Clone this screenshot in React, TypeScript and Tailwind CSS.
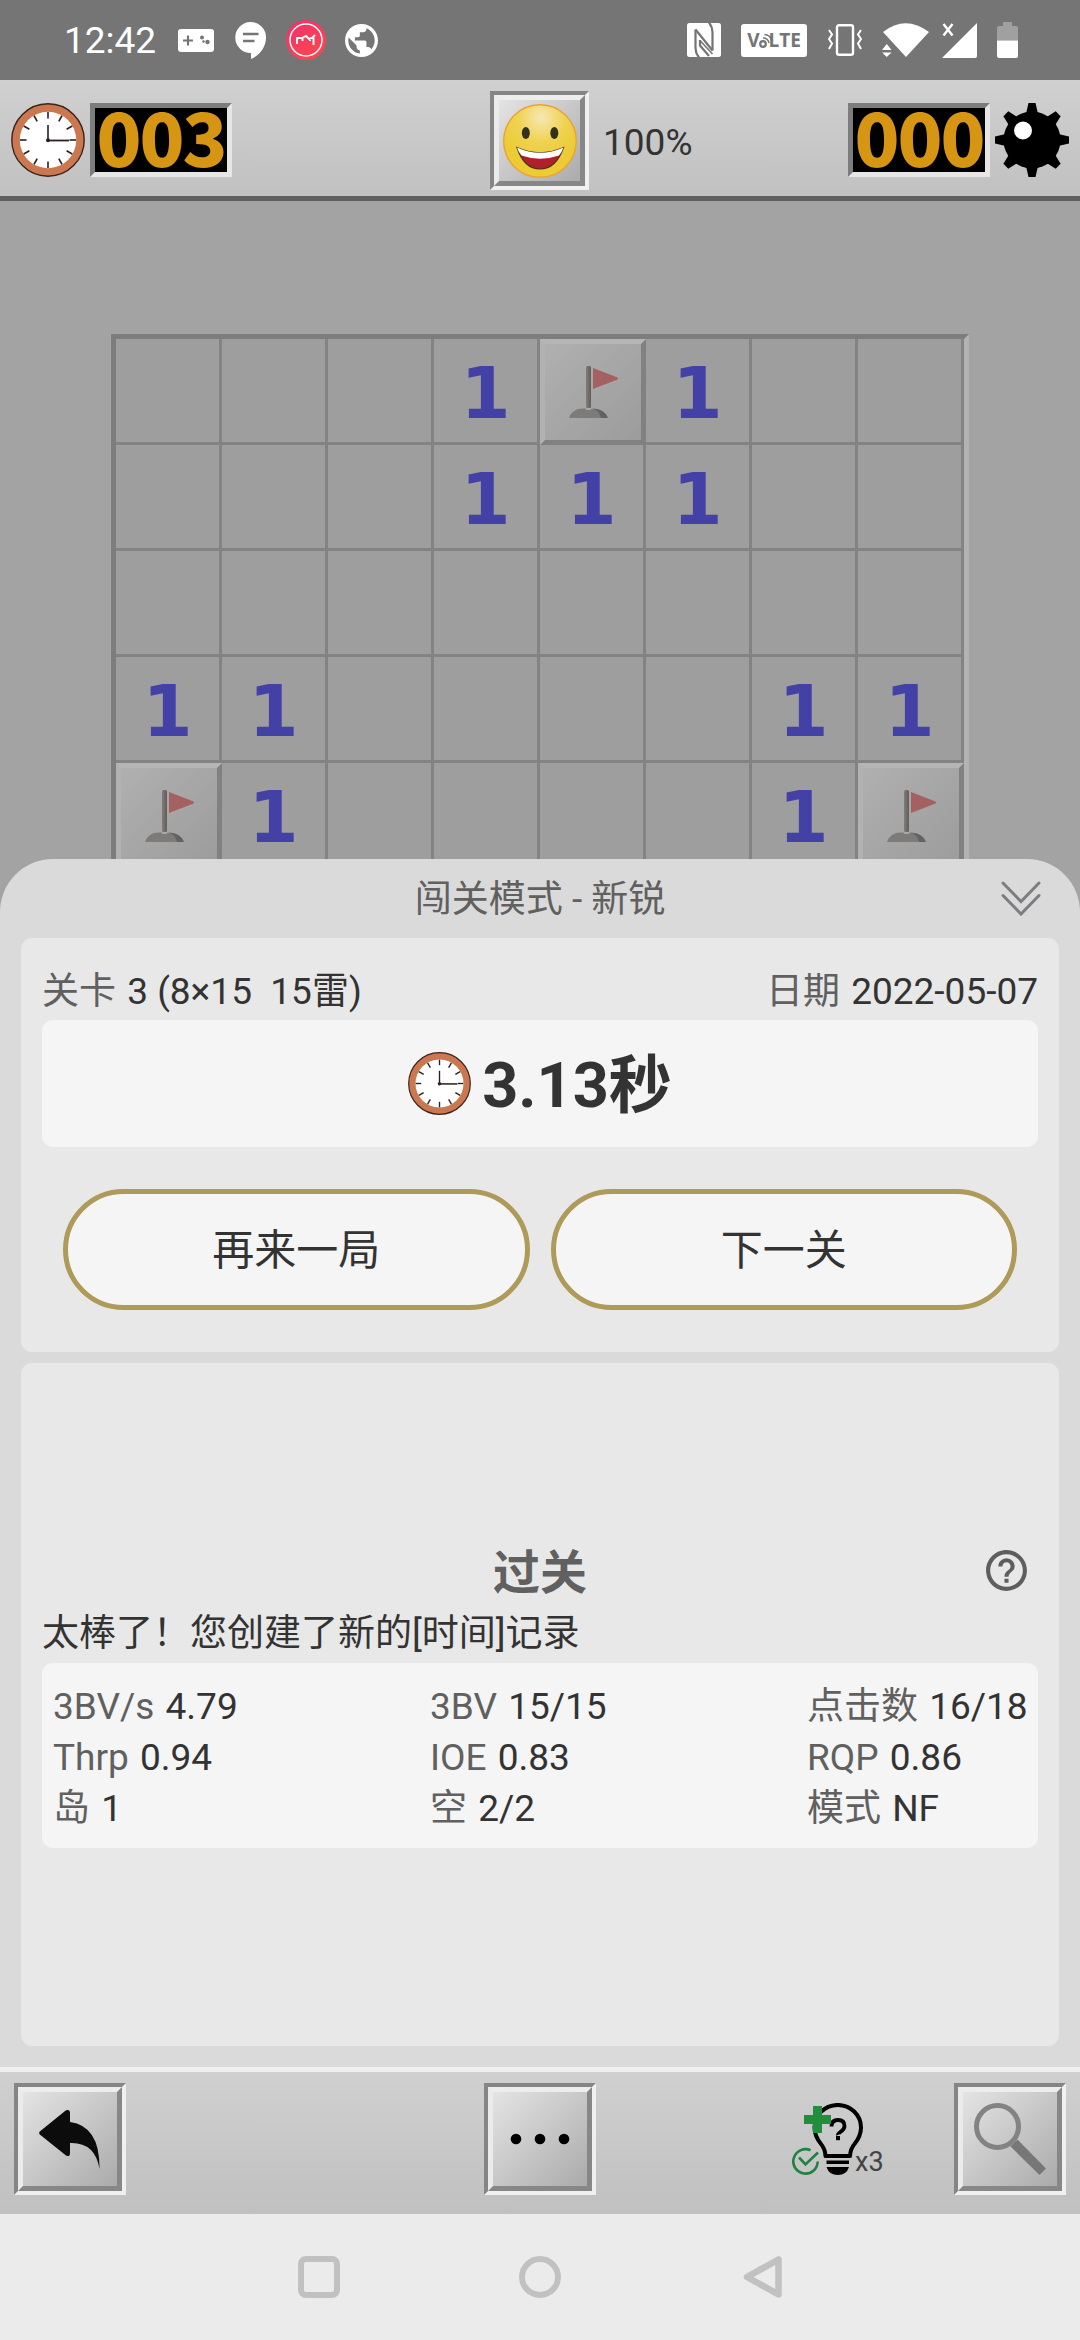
import type { ReactNode } from "react";
import clsx from "clsx";

// "." opened, "F" flagged
const BOARD = ["...1F1..", "...111..", "........", "11....11", "F1....1F"];

const STATS = [
  { label: "3BV/s", value: "4.79" },
  { label: "3BV", value: "15/15" },
  { label: "点击数", value: "16/18" },
  { label: "Thrp", value: "0.94" },
  { label: "IOE", value: "0.83" },
  { label: "RQP", value: "0.86" },
  { label: "岛", value: "1" },
  { label: "空", value: "2/2" },
  { label: "模式", value: "NF" },
];

function ClockIcon({ className }: { className?: string }) {
  return (
    <svg viewBox="0 0 74 74" className={className}>
      <circle cx="37" cy="37" r="36.2" fill="#cb7750" stroke="#3a241c" strokeWidth="1.4" />
      <circle cx="37" cy="37" r="28.2" fill="#fff" />
      <g stroke="#2a2020" strokeWidth="1.6">
        {Array.from({ length: 12 }, (_, i) => (
          <path key={i} d="M37 9v6.5" transform={`rotate(${i * 30} 37 37)`} />
        ))}
        <path d="M37 22v16" />
        <path d="M36 37.5h22" strokeWidth="1.8" />
      </g>
      <circle cx="37" cy="37.3" r="2" fill="#2a2020" />
    </svg>
  );
}

function MineIcon() {
  return (
    <svg viewBox="0 0 74 74" className="size-[74px]">
      <circle cx="37" cy="37" r="28.5" />
      {Array.from({ length: 8 }, (_, i) => (
        <path key={i} d="M33.5 0h7l3 13h-13z" transform={`rotate(${i * 45} 37 37)`} />
      ))}
      <circle cx="28" cy="27.5" r="9" fill="#fff" />
    </svg>
  );
}

function SmileyIcon() {
  return (
    <svg viewBox="0 0 74 74" className="size-[74px]">
      <defs>
        <radialGradient id="face" cx="0.52" cy="0.18" r="0.62">
          <stop offset="0" stopColor="#f7e7b4" />
          <stop offset="0.55" stopColor="#efd24f" />
          <stop offset="1" stopColor="#eccb35" />
        </radialGradient>
      </defs>
      <circle cx="37" cy="37" r="36.3" fill="url(#face)" stroke="#eda22f" strokeWidth="1.4" />
      <ellipse cx="22.8" cy="29" rx="4" ry="6" fill="#33301c" />
      <ellipse cx="51.3" cy="29" rx="4" ry="6" fill="#33301c" />
      <path
        d="M14 43.5Q37 54 60.5 43.5Q53 65 37 65Q21 65 14 43.5z"
        fill="#b0202a"
        stroke="#4a3418"
        strokeWidth="1.2"
      />
      <path d="M14 43.5Q37 54 60.5 43.5Q58.5 49 56 51.5Q37 58 18.5 51.5Q15.5 48 14 43.5z" fill="#fff" />
    </svg>
  );
}

function FlagIcon() {
  return (
    <svg viewBox="0 0 96 96" className="size-24">
      <defs>
        <linearGradient id="pole">
          <stop offset="0" stopColor="#817d7a" />
          <stop offset="1" stopColor="#5f5c5a" />
        </linearGradient>
      </defs>
      <path d="M48 64.5Q60 65 63 74H50z" fill="#646260" />
      <path d="M24 74Q27 64.5 38 64.5H46Q54 65 56 74z" fill="#7d7b79" />
      <ellipse cx="43.5" cy="64.5" rx="3" ry="1.5" fill="#a9a8a6" />
      <rect x="41" y="22" width="5" height="42" rx="1.5" fill="url(#pole)" />
      <path d="M48 24L72.5 33.5q1 1 0 2L48 45z" fill="#a56061" />
    </svg>
  );
}

function Counter({ value }: { value: string }) {
  return (
    <div className="h-[74px] w-[142px] border-[5px] border-t-[#7d7d7d] border-r-[#e6e6e6] border-b-[#e6e6e6] border-l-[#7d7d7d] bg-black">
      <div className="text-center font-['Noto_Sans_CJK_SC',sans-serif] text-[74px] leading-[53px] font-black tracking-[-2px] text-[#d69613]">
        {value}
      </div>
    </div>
  );
}

function BevelButton({ className, children }: { className?: string; children: ReactNode }) {
  return (
    <button
      className={clsx(
        "block border-4 border-t-[#858585] border-r-[#f0f0f0] border-b-[#f0f0f0] border-l-[#858585]",
        className,
      )}
    >
      <span className="flex size-full items-center justify-center border-[5px] border-t-[#ededed] border-r-[#878787] border-b-[#878787] border-l-[#ebebeb] bg-linear-135 from-[#e4e4e4] to-[#ababab]">
        {children}
      </span>
    </button>
  );
}

function StatusBar() {
  return (
    <div className="flex h-20 items-center bg-[#757575] pl-16 text-white">
      <span className="w-[93px] text-[37px] leading-none">12:42</span>
      <svg viewBox="0 0 36 23" className="ml-[21px] h-[23px] w-9">
        <rect width="36" height="23" rx="3" fill="#fff" />
        <path d="M5 11.5h10M10 6.5v10" stroke="#757575" strokeWidth="2.2" />
        <g fill="#757575">
          <circle cx="24" cy="8.5" r="2" />
          <circle cx="29.5" cy="13" r="2.2" />
          <circle cx="25.5" cy="12.5" r="1.3" />
        </g>
      </svg>
      <svg viewBox="0 0 31 37" className="ml-[21px] h-[37px] w-[31px]">
        <path d="M15.5 0a15.5 15.5 0 0 1 15.5 15.5C31 25 25 33 16 37v-6A15.5 15.5 0 0 1 15.5 0z" fill="#fff" />
        <path d="M8 12h15.5M8 19h11.5" stroke="#757575" strokeWidth="2.6" />
      </svg>
      <svg viewBox="0 0 40 40" className="ml-5 size-10">
        <defs>
          <linearGradient id="app" x1="0" y1="0" x2="0.6" y2="1">
            <stop offset="0" stopColor="#f0306e" />
            <stop offset="1" stopColor="#fb4650" />
          </linearGradient>
        </defs>
        <circle cx="20" cy="20" r="20" fill="url(#app)" />
        <circle cx="20" cy="20" r="16" fill="none" stroke="#fff" strokeWidth="1.5" />
        <path
          d="M11 24v-6l5 0 4-2 3 3 3-1 3-3M16.5 18v3M24 18v3M27.5 17v8"
          fill="none"
          stroke="#fff"
          strokeWidth="1.9"
        />
      </svg>
      <svg viewBox="2 2 20 20" className="ml-[19px] size-[33px]" fill="#fff">
        <path d="M12 2C6.48 2 2 6.48 2 12s4.48 10 10 10 10-4.48 10-10S17.52 2 12 2zm-1 17.93c-3.95-.49-7-3.85-7-7.93 0-.62.08-1.21.21-1.79L9 15v1c0 1.1.9 2 2 2v1.93zm6.9-2.54c-.26-.81-1-1.39-1.9-1.39h-1v-3c0-.55-.45-1-1-1H8v-2h2c.55 0 1-.45 1-1V7h2c1.1 0 2-.9 2-2v-.41c2.93 1.19 5 4.06 5 7.41 0 2.08-.8 3.97-2.1 5.39z" />
      </svg>

      <svg viewBox="0 0 34 34" className="ml-[309px] h-[34px] w-[34px]">
        <rect width="34" height="34" rx="2.5" fill="#fff" />
        <path d="M8.500 6.500V25q0 5 3.500 9.500M25.500 27.500V9q0-5-3.500-9.500" fill="none" stroke="#757575" strokeWidth="2.2" />
        <path d="M8.500 6.500L25.500 27.500M13 17v5.500L22 33M12 0" fill="none" stroke="#757575" strokeWidth="2.2" />
        <path d="M13 17.500L25.500 31" fill="none" stroke="#757575" strokeWidth="1.6" />
      </svg>
      <div className="relative ml-5 flex h-[33px] w-[66px] items-center justify-center gap-[9px] rounded-[3px] bg-white font-['Open_Sans',sans-serif] text-[19px] leading-none font-bold text-[#757575]">
        <span>V</span>
        <span>LTE</span>
        <svg viewBox="0 0 14 18" className="absolute top-[7px] left-[17px] h-[18px] w-3.5" fill="none" stroke="#757575">
          <circle cx="5" cy="13" r="2.8" strokeWidth="2.2" />
          <path d="M5 7q5 0 6 5M6.500 3.500q6 .5 7 6" strokeWidth="1.5" />
        </svg>
      </div>
      <svg viewBox="0 0 34 32" className="ml-[21px] h-8 w-[34px]" fill="none" stroke="#fff">
        <rect x="9" y="1.2" width="16" height="29.6" rx="2" strokeWidth="2.4" />
        <path d="M1 6l3 4.5L1 15l3 4.5L1 25M33 6l-3 4.5 3 4.5-3 4.5 3 5.5" strokeWidth="2" />
      </svg>
      <svg viewBox="0 0 48 34" className="ml-5 h-[34px] w-12" fill="#fff">
        <path d="M1 9Q23.5-8.500 47 9L24 34z" />
        <path d="M0 27h9.5L4.8 21zM0 29.5h9.5L4.8 34z" />
      </svg>
      <svg viewBox="0 0 35 35" className="ml-3 size-[35px]" fill="#fff">
        <path d="M35 0v33q0 2-2 2H0z" />
        <path d="M1.5 1l9 11.5M10.5 1l-9 11.5" stroke="#fff" strokeWidth="2.4" />
      </svg>
      <svg viewBox="0 0 21 36" className="ml-5 h-9 w-[21px]">
        <path d="M6 0h9v4h4q2 0 2 2v12.5H0V6q0-2 2-2h4z" fill="#a0a0a0" />
        <path d="M0 18.5h21V34q0 2-2 2H2q-2 0-2-2z" fill="#fff" />
      </svg>
    </div>
  );
}

function GameHeader() {
  return (
    <div className="grid h-[121px] grid-cols-[490px_358px_1fr] border-b-[5px] border-[#606060] bg-linear-to-b from-[#d0d0d0] to-[#c1c1c1]">
      <div className="flex gap-[5px] pt-[23px] pl-[11px]">
        <ClockIcon className="size-[74px]" />
        <Counter value="003" />
      </div>
      <div className="flex pt-[11px]">
        <BevelButton className="size-[99px]">
          <SmileyIcon />
        </BevelButton>
        <span className="pt-1.5 pl-3.5 text-[37px] leading-[91px] text-[#333]">100%</span>
      </div>
      <div className="flex gap-[5px] pt-[23px]">
        <Counter value="000" />
        <MineIcon />
      </div>
    </div>
  );
}

function Cell({ kind }: { kind: string }) {
  if (kind === "F") {
    return (
      <div className="size-[106px] border-[5px] border-t-[#b5b5b5] border-r-[#818181] border-b-[#818181] border-l-[#b2b2b2] bg-linear-135 from-[#b0b0b0] to-[#9c9c9c]">
        <FlagIcon />
      </div>
    );
  }
  return (
    <div className="size-[106px] border-r-[3px] border-b-[3px] border-[#838383] bg-[#9e9e9e] text-center font-['DejaVu_Sans',sans-serif] text-[72px] leading-[108px] font-bold text-[#4340a6]">
      {kind === "." ? "" : kind}
    </div>
  );
}

function Board() {
  return (
    <div className="h-[658px] overflow-hidden bg-[#a3a3a3] pt-[133px]">
      <div className="ml-[111px] grid w-[858px] grid-cols-8 border-[5px] border-t-[#7d7d7d] border-r-[#b3b3b3] border-b-[#b3b3b3] border-l-[#7d7d7d]">
        {BOARD.join("")
          .split("")
          .map((kind, i) => (
            <Cell key={i} kind={kind} />
          ))}
      </div>
    </div>
  );
}

function PillButton({ children }: { children: ReactNode }) {
  return (
    <button className="h-[121px] flex-1 rounded-full border-[5px] border-[#ae9a59] bg-[#f5f5f5] pt-[3px] text-[42px] leading-none text-[#333]">
      {children}
    </button>
  );
}

function Labeled({ label, value }: { label: string; value: string }) {
  return (
    <span className="whitespace-pre">
      <span className="mr-[2px] text-[#606060]">{label}</span> {value}
    </span>
  );
}

function ResultSheet() {
  return (
    <div className="relative z-10 h-[1208px] rounded-t-[53px] bg-[#dadada] px-[21px] text-[37px] text-[#333]">
      <div className="relative h-[79px] text-center leading-[82px] text-[#606060]">
        闯关模式 - 新锐
        <svg
          viewBox="0 0 40 36"
          className="absolute top-[21px] right-[18px] h-9 w-10"
          fill="none"
          stroke="#7b7d80"
          strokeWidth="3"
          strokeLinecap="round"
        >
          <path d="M2 3l18 18.5L38 3M2 15.5L20 34l18-18.5" />
        </svg>
      </div>

      <section className="h-[414px] rounded-[11px] bg-[#e8e8e8] px-[21px] pt-7">
        <div className="flex h-[54px] justify-between leading-[52px]">
          <Labeled label="关卡" value="3 (8×15  15雷)" />
          <Labeled label="日期" value="2022-05-07" />
        </div>
        <div className="flex h-[127px] items-center justify-center gap-[11px] rounded-[11px] bg-[#f5f5f5]">
          <ClockIcon className="size-[63px]" />
          <span className="pt-1 text-[63px] leading-none font-bold">3.13秒</span>
        </div>
        <div className="mt-[42px] flex gap-[21px] px-[21px]">
          <PillButton>再来一局</PillButton>
          <PillButton>下一关</PillButton>
        </div>
      </section>

      <section className="mt-[11px] h-[683px] rounded-[11px] bg-[#e8e8e8] px-[21px] pt-[174px]">
        <div className="relative h-[72px] text-center text-[47px] leading-[71px] font-bold text-[#606060]">
          过关
          <svg viewBox="0 0 24 24" className="absolute top-[9px] right-[7px] size-[49px]" fill="#5e5e5e">
            <path d="M11 18h2v-2h-2v2zm1-16C6.48 2 2 6.48 2 12s4.48 10 10 10 10-4.48 10-10S17.52 2 12 2zm0 18c-4.41 0-8-3.59-8-8s3.59-8 8-8 8 3.59 8 8-3.59 8-8 8zm0-14c-2.21 0-4 1.79-4 4h2c0-1.1.9-2 2-2s2 .9 2 2c0 2-3 1.75-3 5h2c0-2.25 3-2.5 3-5 0-2.21-1.79-4-4-4z" />
          </svg>
        </div>
        <p className="h-[54px] leading-[50px]">太棒了！您创建了新的[时间]记录</p>
        <div className="grid h-[185px] grid-cols-[377px_377px_auto] content-center rounded-[11px] bg-[#f5f5f5] pt-[3px] pl-[11px] leading-[51px]">
          {STATS.map((s) => (
            <Labeled key={s.label} label={s.label} value={s.value} />
          ))}
        </div>
      </section>
    </div>
  );
}

function HintButton() {
  return (
    <div className="relative h-[72px] w-[91px]">
      <svg viewBox="0 0 72 72" className="size-[72px]">
        <path
          d="M33.5 53Q33 45.5 29 41Q22.5 33 22.5 24.5A23.2 22.5 0 0 1 69 24.5Q69 33 62.5 41Q58.5 45.5 58 53z"
          fill="none"
          stroke="#000"
          strokeWidth="4"
          strokeLinejoin="round"
        />
        <path d="M34.5 57.5h22.5v3.500H34.5zM34.5 64h22.5q-2.5 8-11.2 8t-11.3-8z" />
        <path
          d="M39.500 23.500q0-6.500 6.500-6.500t6.500 6q0 3-3.500 5.500t-3 3.500"
          fill="none"
          stroke="#000"
          strokeWidth="3.8"
        />
        <path d="M44 33h4v4.200h-4z" />
        <path d="M21 3h9v9h9v9h-9v9h-9v-9h-9v-9h9z" fill="#1f8f3c" />
        <g fill="none" stroke="#1f8240" strokeWidth="2.6">
          <path d="M18.5 47.300A12.2 12.2 0 1 0 25.700 58.5" />
          <path d="M7 54.5l6.5 7L26 49.5" />
        </g>
      </svg>
      <span className="absolute top-[43px] left-[63px] text-[27px] leading-[32px] text-[#444]">x3</span>
    </div>
  );
}

function Toolbar() {
  return (
    <div className="grid h-[147px] grid-cols-[484px_308px_162px_1fr] border-t-[5px] border-[#efefef] bg-linear-to-b from-[#d0d0d0] to-[#c0c0c0] pt-[11px]">
      <BevelButton className="ml-3.5 size-28">
        <svg viewBox="0 0 62 60" className="mb-px h-[60px] w-[62px]">
          <path
            d="M.8 22.5L27 1.300Q31 0 31 4V13Q61 17 60.5 60Q56 33 31 34V44Q31 48.5 27 46.5L.8 25.500Q-.5 24 .8 22.5z"
            fill="#0c0c0c"
          />
        </svg>
      </BevelButton>
      <BevelButton className="size-28">
        <svg viewBox="0 0 60 12" className="h-3 w-[60px]">
          <circle cx="6" cy="6" r="5.3" />
          <circle cx="30" cy="6" r="5.3" />
          <circle cx="54" cy="6" r="5.3" />
        </svg>
      </BevelButton>
      <div className="pt-5">
        <HintButton />
      </div>
      <BevelButton className="size-28">
        <svg viewBox="0 0 72 72" className="size-[72px]">
          <circle cx="23.5" cy="23.5" r="21" fill="none" stroke="#838383" strokeWidth="5" />
          <path d="M43.5 36.5L72 65.5 65.5 72 36.5 43.5l4-4z" fill="#777" />
        </svg>
      </BevelButton>
    </div>
  );
}

function NavBar() {
  return (
    <div className="h-[126px] bg-[#ebebeb] pt-[42px]">
      <div className="ml-[298px] grid h-[42px] grid-cols-[221px_224px_40px]">
        <div className="size-[42px] rounded-[8px] border-[6px] border-[#c1c1c1]" />
        <div className="size-[42px] rounded-full border-[6px] border-[#c1c1c1]" />
        <svg viewBox="0 0 40 42" className="h-[42px] w-10">
          <path
            d="M35.5 3.5v35L4 21z"
            fill="none"
            stroke="#c1c1c1"
            strokeWidth="6.5"
            strokeLinejoin="round"
          />
        </svg>
      </div>
    </div>
  );
}

export default function App() {
  return (
    <div className="h-[2340px] w-[1080px] overflow-hidden bg-[#a3a3a3] font-[Roboto,'Noto_Sans_CJK_SC',sans-serif]">
      <StatusBar />
      <GameHeader />
      <Board />
      <ResultSheet />
      <Toolbar />
      <NavBar />
    </div>
  );
}
